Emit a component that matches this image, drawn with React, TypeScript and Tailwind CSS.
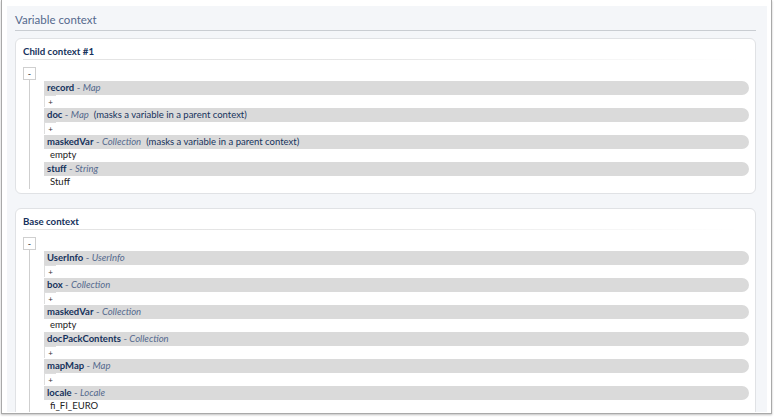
import React from "react";

type Row =
  | { kind: "var"; name: string; type: string; note?: string }
  | { kind: "plus" }
  | { kind: "text"; text: string };

const child: Row[] = [
  { kind: "var", name: "record", type: "Map" },
  { kind: "plus" },
  { kind: "var", name: "doc", type: "Map", note: "(masks a variable in a parent context)" },
  { kind: "plus" },
  { kind: "var", name: "maskedVar", type: "Collection", note: "(masks a variable in a parent context)" },
  { kind: "text", text: "empty" },
  { kind: "var", name: "stuff", type: "String" },
  { kind: "text", text: "Stuff" },
];

const base: Row[] = [
  { kind: "var", name: "UserInfo", type: "UserInfo" },
  { kind: "plus" },
  { kind: "var", name: "box", type: "Collection" },
  { kind: "plus" },
  { kind: "var", name: "maskedVar", type: "Collection" },
  { kind: "text", text: "empty" },
  { kind: "var", name: "docPackContents", type: "Collection" },
  { kind: "plus" },
  { kind: "var", name: "mapMap", type: "Map" },
  { kind: "plus" },
  { kind: "var", name: "locale", type: "Locale" },
  { kind: "text", text: "fi_FI_EURO" },
];

function RowView({ r }: { r: Row }) {
  if (r.kind === "var") {
    return (
      <div className="h-[13.5px] flex items-center bg-[#dadada] rounded-r-[7px] pl-[3px] whitespace-nowrap">
        <span className="font-bold text-[#16325c]">{r.name}</span>
        <span className="text-[#54698d]">&nbsp;-&nbsp;</span>
        <span className="italic text-[#54698d]">{r.type}</span>
        {r.note && <span className="text-[#16325c] ml-[5px]">{r.note}</span>}
      </div>
    );
  }
  if (r.kind === "plus") {
    return (
      <div className="h-[13.5px] flex items-center">
        <div className="w-[12px] h-[12px] border-l border-t border-[#dedede] flex items-center justify-center text-[8px] leading-none text-[#333]">
          +
        </div>
      </div>
    );
  }
  return (
    <div className="h-[13.5px] flex items-center pl-[6px] text-[#222]">{r.text}</div>
  );
}

function Card({ title, rows, last }: { title: string; rows: Row[]; last?: boolean }) {
  return (
    <div
      className={
        "bg-white border border-[#e0e2e5] rounded-[6px] pl-[7px] pr-[6px] pt-[5px] " +
        (last ? "pb-[40px]" : "pb-[4px]")
      }
    >
      <div className="h-[14px] flex items-center font-bold text-[9.7px] text-[#16325c]">{title}</div>
      <div className="h-[1px] mt-[1px] bg-gradient-to-r from-[#e3e3e3] via-[#e6e6e6] to-transparent mr-[8px]" />
      <div className="mt-[7px] relative">
        <div className="w-[13px] h-[13px] border border-[#cfcfcf] flex items-center justify-center text-[9px] leading-none text-[#333] bg-white">
          -
        </div>
        <div className="absolute left-[6px] top-[13px] bottom-0 w-[1px] bg-[#cfcfcf]" />
        <div className="ml-[21px] mt-[1px] text-[9.5px]">
          {rows.map((r, i) => (
            <RowView key={i} r={r} />
          ))}
        </div>
      </div>
    </div>
  );
}

export default function App() {
  return (
    <div
      className="w-[774px] h-[419px] bg-white overflow-hidden"
      style={{ fontFamily: "Lato, 'Open Sans', sans-serif" }}
    >
      <div className="ml-[1px] w-[771px] h-[414px] border-l border-r border-b border-[#a9a9a9] shadow-[0_1px_2px_rgba(0,0,0,0.25)] pt-[6px] pl-[5px] pr-[4px]">
        <div className="h-[406px] bg-[#f4f6f9] overflow-hidden pl-[8px] pr-[11px]">
          <div className="h-[24px] flex items-end pb-[2px] text-[11.5px] text-[#54698d]">Variable context</div>
          <div className="h-[1px] bg-[#c9cdd2]" />
          <div className="mt-[7px] flex flex-col gap-[14px]">
            <Card title="Child context #1" rows={child} />
            <Card title="Base context" rows={base} last />
          </div>
        </div>
      </div>
    </div>
  );
}
